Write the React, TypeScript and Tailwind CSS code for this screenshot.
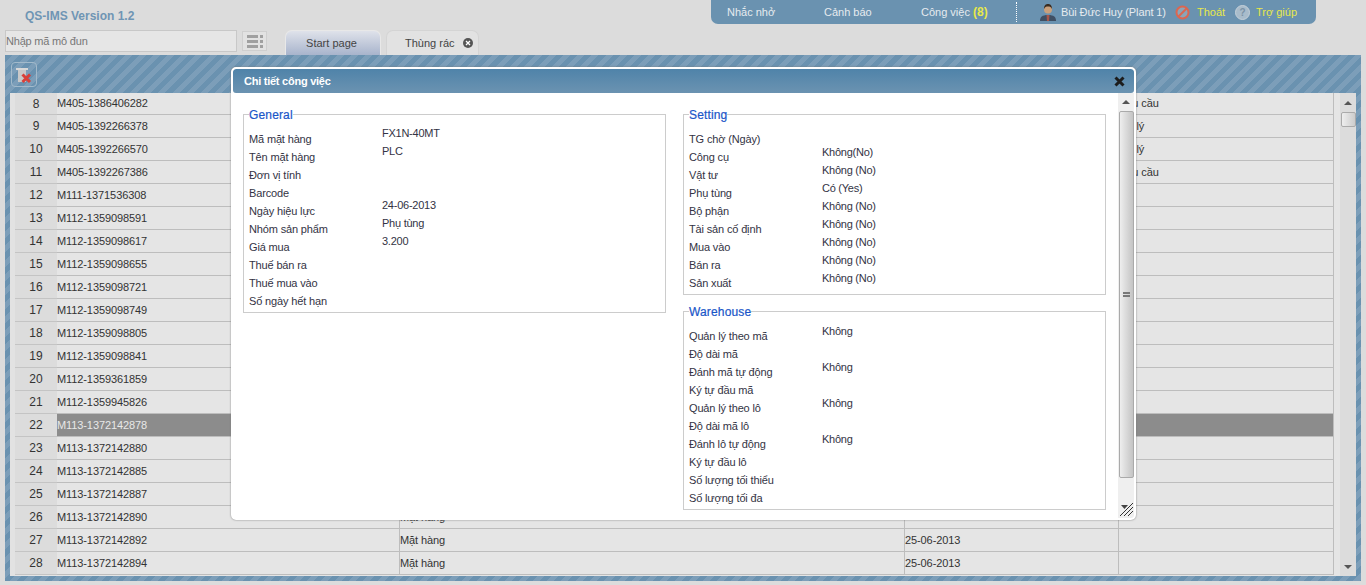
import React from "react";

// rows 8-25 have their middle columns hidden behind the dialog
const rows = [
  { no: 8, code: "M405-1386406282", type: "", date: "", status: "Yêu cầu" },
  { no: 9, code: "M405-1392266378", type: "", date: "", status: "Xử lý" },
  { no: 10, code: "M405-1392266570", type: "", date: "", status: "Xử lý" },
  { no: 11, code: "M405-1392267386", type: "", date: "", status: "Yêu cầu" },
  { no: 12, code: "M111-1371536308", type: "", date: "", status: "" },
  { no: 13, code: "M112-1359098591", type: "", date: "", status: "" },
  { no: 14, code: "M112-1359098617", type: "", date: "", status: "" },
  { no: 15, code: "M112-1359098655", type: "", date: "", status: "" },
  { no: 16, code: "M112-1359098721", type: "", date: "", status: "" },
  { no: 17, code: "M112-1359098749", type: "", date: "", status: "" },
  { no: 18, code: "M112-1359098805", type: "", date: "", status: "" },
  { no: 19, code: "M112-1359098841", type: "", date: "", status: "" },
  { no: 20, code: "M112-1359361859", type: "", date: "", status: "" },
  { no: 21, code: "M112-1359945826", type: "", date: "", status: "" },
  { no: 22, code: "M113-1372142878", type: "", date: "", status: "" },
  { no: 23, code: "M113-1372142880", type: "", date: "", status: "" },
  { no: 24, code: "M113-1372142885", type: "", date: "", status: "" },
  { no: 25, code: "M113-1372142887", type: "", date: "", status: "" },
  { no: 26, code: "M113-1372142890", type: "Mặt hàng", date: "", status: "" },
  { no: 27, code: "M113-1372142892", type: "Mặt hàng", date: "25-06-2013", status: "" },
  { no: 28, code: "M113-1372142894", type: "Mặt hàng", date: "25-06-2013", status: "" },
];

const general = {
  labels: ["Mã mặt hàng", "Tên mặt hàng", "Đơn vị tính", "Barcode", "Ngày hiệu lực", "Nhóm sản phẩm", "Giá mua", "Thuế bán ra", "Thuế mua vào", "Số ngày hết hạn"],
  values: ["FX1N-40MT", "PLC", "", "", "24-06-2013", "Phụ tùng", "3.200"],
};

const setting = {
  labels: ["TG chờ (Ngày)", "Công cụ", "Vật tư", "Phụ tùng", "Bộ phận", "Tài sản cố định", "Mua vào", "Bán ra", "Sản xuất"],
  values: ["", "Không(No)", "Không (No)", "Có (Yes)", "Không (No)", "Không (No)", "Không (No)", "Không (No)", "Không (No)"],
};

const warehouse = {
  labels: ["Quản lý theo mã", "Độ dài mã", "Đánh mã tự động", "Ký tự đầu mã", "Quản lý theo lô", "Độ dài mã lô", "Đánh lô tự động", "Ký tự đầu lô", "Số lượng tối thiểu", "Số lượng tối đa"],
  values: ["Không", "", "Không", "", "Không", "", "Không"],
};

const ArrowUp = () => <div className="w-0 h-0 border-x-[4px] border-x-transparent border-b-[4px] border-b-[#555]" />;
const ArrowDown = () => <div className="w-0 h-0 border-x-[4px] border-x-transparent border-t-[4px] border-t-[#555]" />;

const GridBar = () => (
  <div className="flex gap-[2px]">
    <div className="w-[11px] h-[3px] bg-[#a0a0a0]" />
    <div className="w-[3px] h-[3px] bg-[#a0a0a0]" />
  </div>
);

const InfoBox = ({ title, labels, values, valueGap }: { title: string; labels: string[]; values: string[]; valueGap: string }) => (
  <fieldset className="border border-[#cccccc] pl-[5px] pb-[2px] min-w-0">
    <legend className="pt-[2px] text-[12px] leading-[14px] font-normal text-[#1a56c8] tracking-[0.15px] [-webkit-text-stroke:0.2px_#1a56c8]">{title}</legend>
    <div className="flex">
      <div className="w-[133px] pt-[8px] shrink-0 tracking-[-0.15px]">
        {labels.map((label) => (
          <div key={label} className="h-[18px] leading-[18px] whitespace-nowrap">{label}</div>
        ))}
      </div>
      <div className={valueGap}>
        {values.map((value, i) => (
          <div key={i} className="h-[18px] leading-[18px] whitespace-nowrap tracking-[-0.25px]">{value}</div>
        ))}
      </div>
    </div>
  </fieldset>
);

const DetailModal = () => (
  <div className="absolute left-[231px] top-[67px] w-[905px] h-[453px] bg-white rounded-[5px] border-2 border-white shadow-[0_0_2px_#777] flex flex-col overflow-hidden">
    <div className="h-[24px] shrink-0 rounded-[3px] bg-gradient-to-b from-[#4f83a9] to-[#6b93b1] flex items-center justify-between pl-[11px] pr-[9px]">
      <span className="text-[11px] font-bold text-white tracking-[-0.25px]">Chi tiết công việc</span>
      <svg width="11" height="11" viewBox="0 0 11 11">
        <path d="M1.500 1.500 9.500 9.500M9.500 1.500 1.500 9.500" stroke="#1c1c1c" strokeWidth="3" />
      </svg>
    </div>
    <div className="flex-1 flex min-h-0 text-[11px] text-[#333344]">
      <div className="flex-1 flex gap-[17px] pl-[10px] pt-[13px]">
        <div className="w-[423px] shrink-0">
          <InfoBox title="General" labels={general.labels} values={general.values} valueGap="pt-[2px]" />
        </div>
        <div className="w-[423px] shrink-0 flex flex-col gap-[8px]">
          <InfoBox title="Setting" labels={setting.labels} values={setting.values} valueGap="pt-[3px]" />
          <InfoBox title="Warehouse" labels={warehouse.labels} values={warehouse.values} valueGap="pt-[3px]" />
        </div>
      </div>
      <div className="w-[16px] shrink-0 bg-[#efefef] flex flex-col items-center relative">
        <div className="h-[18px] flex items-center justify-center"><ArrowUp /></div>
        <div className="w-[15px] h-[367px] rounded-[2px] border border-[#aaa] bg-gradient-to-r from-[#eeeeee] to-[#c4c4c4] flex items-center justify-center">
          <div className="w-[7px] h-[5px] border-y-2 border-[#777]" />
        </div>
        <svg className="absolute right-[1px] bottom-[2px]" width="13" height="13" viewBox="0 0 13 13">
          <path d="M0 13 13 0M4 13 13 4M8 13 13 8" stroke="#333" strokeWidth="1" fill="none" />
          <path d="M1 2h7L4.500 6z" fill="#444" />
        </svg>
      </div>
    </div>
  </div>
);

export default function App() {
  return (
    <div className="relative w-[1366px] h-[585px] overflow-hidden bg-[#dcdcdc] font-['Liberation_Sans',Arial,sans-serif] text-[11px] text-[#333]">
      {/* top header */}
      <div className="flex h-[30px] items-start">
        <div className="pl-[25px] pt-[9px] text-[12px] leading-[14px] font-bold text-[#6f95b4]">QS-IMS Version 1.2</div>
        <div className="ml-auto mr-[50px] w-[605px] h-[24px] rounded-b-[7px] bg-[#6a92b0] flex items-center pl-[16px] text-[#e6ebef]">
          <span className="w-[97px]">Nhắc nhở</span>
          <span className="w-[97px]">Cảnh báo</span>
          <span className="w-[95px]">Công việc <b className="text-[#e8e84a] text-[12px]">(8)</b></span>
          <div className="h-[20px] border-l border-dotted border-white" />
          <svg className="ml-[22px]" width="18" height="18" viewBox="0 0 18 18">
            <path d="M1 18c0-4 2-6 8-6s8 2 8 6z" fill="#3f4f63" />
            <path d="M7.500 12h3L10 18H8z" fill="#a8564a" />
            <circle cx="9" cy="6.500" r="4" fill="#c9a07c" />
            <path d="M5 6c0-4 2-5 4-5s4 1 4 5c-1-2-2-2.500-4-2.500S6 4 5 6z" fill="#3a2c20" />
          </svg>
          <span className="ml-[4px] w-[114px] whitespace-nowrap tracking-[-0.1px]">Bùi Đức Huy (Plant 1)</span>
          <svg width="15" height="15" viewBox="0 0 15 15">
            <circle cx="7.500" cy="7.500" r="6" fill="#8aa5b8" stroke="#dc6650" strokeWidth="2" />
            <path d="M3.500 11.500 11.500 3.500" stroke="#dc6650" strokeWidth="2" />
          </svg>
          <span className="ml-[7px] w-[38px] text-[#e8e84a]">Thoát</span>
          <svg width="15" height="15" viewBox="0 0 15 15">
            <circle cx="7.500" cy="7.500" r="7" fill="#a9bccb" stroke="#c5d0d9" />
            <text x="7.500" y="11" textAnchor="middle" fontSize="10" fontWeight="700" fill="#7b93a6">?</text>
          </svg>
          <span className="ml-[6px] text-[#e8e84a] whitespace-nowrap">Trợ giúp</span>
        </div>
      </div>

      {/* module search and tabs */}
      <div className="flex h-[25px] pl-[5px]">
        <input
          readOnly
          placeholder="Nhập mã mô đun"
          className="w-[232px] h-[22px] px-[0px] border border-[#c8c8c8] bg-[#e6e6e6] text-[11px] tracking-[-0.2px] placeholder:text-[#777] outline-none"
        />
        <div className="ml-[5px] mt-[1px] w-[25px] h-[20px] border border-[#cfcfcf] bg-[#e2e2e2] flex flex-col justify-center gap-[2px] pl-[4px]">
          <GridBar />
          <GridBar />
          <GridBar />
        </div>
        <div className="ml-[18px] w-[96px] h-[25px] pr-[3px] rounded-t-[7px] border-x border-t border-[#e8e8e8] bg-gradient-to-b from-[#dfe2ea] to-[#a8b4cc] flex items-center justify-center text-[#444]">
          Start page
        </div>
        <div className="ml-[5px] w-[93px] h-[25px] rounded-t-[7px] border-x border-t border-[#d4d4d4] bg-[#e2e2e2] flex items-center pl-[18px] text-[#444]">
          Thùng rác
          <div className="ml-[8px] w-[10px] h-[10px] rounded-full bg-[#555] flex items-center justify-center">
            <svg width="6" height="6" viewBox="0 0 6 6"><path d="M1 1 5 5M5 1 1 5" stroke="#fff" strokeWidth="1.300" /></svg>
          </div>
        </div>
      </div>

      {/* striped work area */}
      <div className="ml-[5px] w-[1356px] h-[526px] px-[5px] pb-[5px] flex flex-col bg-[repeating-linear-gradient(135deg,#6a92b0_0px,#6a92b0_5px,#7c9eb9_5px,#7c9eb9_10px)]">
        <div className="h-[38px] shrink-0 pt-[7px] pl-[1px]">
          <div className="w-[26px] h-[25px] rounded-[4px] border border-[#a3bacb] flex items-center justify-center">
            <svg width="18" height="18" viewBox="0 0 18 18">
              <path d="M1 2h12v2H1z" fill="#d8d8d8" />
              <path d="M3 4h8v12H3z" fill="#c9c9c9" />
              <path d="M7.500 8.500 15 16M15 8.500 7.500 16" stroke="#d8403a" strokeWidth="3" />
            </svg>
          </div>
        </div>
        <div className="flex-1 flex min-h-0 bg-[#e5e5e5]">
          <div className="w-[5px] shrink-0 bg-[#e2e2e2]" />
          <table className="w-[1319px] h-fit table-fixed border-separate border-spacing-0 shrink-0">
            <colgroup>
              <col className="w-[42px]" />
              <col className="w-[343px]" />
              <col className="w-[505px]" />
              <col className="w-[214px]" />
              <col className="w-[215px]" />
            </colgroup>
            <tbody>
              {rows.map((row, i) => {
                const selected = row.no === 22;
                const cell = `h-[23px] p-0 border-b border-r border-[#bdbdbd] whitespace-nowrap overflow-hidden tracking-[-0.1px] ${selected ? "bg-[#8c8c8c] text-[#e8e8e8]" : ""}`;
                return (
                  <tr key={row.no} className={i === 0 ? "[&>td]:h-[22px]" : ""}>
                    <td className="h-[23px] p-0 border-b border-[#c4c4c4] bg-[#dcdcdc] text-center text-[12px] text-[#333]">{row.no}</td>
                    <td className={cell}>{row.code}</td>
                    <td className={cell}>{row.type}</td>
                    <td className={cell}>{row.date}</td>
                    <td className={cell}>{row.status}</td>
                  </tr>
                );
              })}
            </tbody>
          </table>
          <div className="flex-1 flex bg-[#dcdcdc]">
            <div className="w-[6px] bg-[#e5e5e5]" />
            <div className="w-[16px] flex flex-col items-center">
              <div className="h-[19px] flex items-center justify-center"><ArrowUp /></div>
              <div className="w-[15px] h-[15px] rounded-[2px] border border-[#aaa] bg-gradient-to-r from-[#eeeeee] to-[#cccccc]" />
              <div className="mt-auto h-[18px] flex items-center justify-center"><ArrowDown /></div>
            </div>
          </div>
        </div>
      </div>

      <DetailModal />
    </div>
  );
}
